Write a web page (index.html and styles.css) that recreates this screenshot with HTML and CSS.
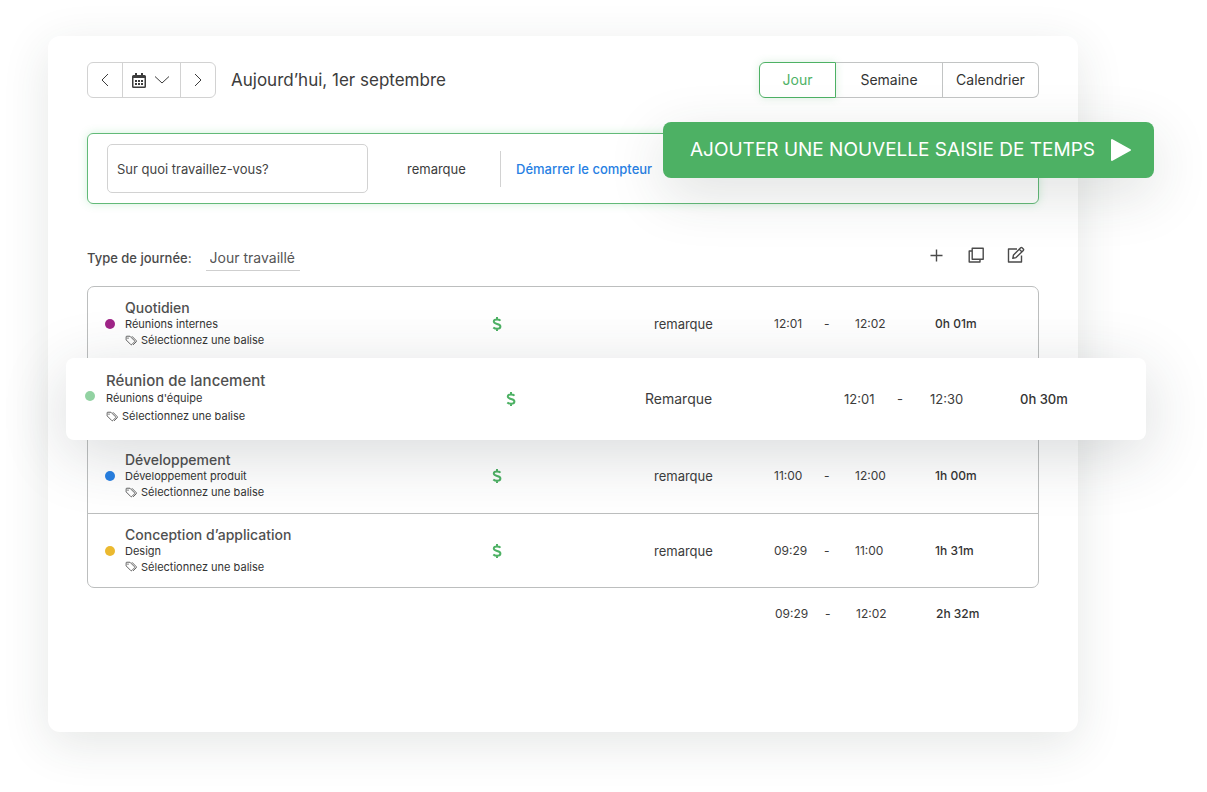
FILE: index.html
```html
<!DOCTYPE html>
<html lang="fr">
<head>
    <meta charset="UTF-8">
    <meta name="viewport" content="width=device-width, initial-scale=1.0">
    <title>Feuille de temps</title>
    <link rel="stylesheet" href="styles.css">
</head>
<body>
    <!-- Shared icons -->
    <svg class="sprite" aria-hidden="true">
        <symbol id="icon-tags" viewBox="0 0 16 14">
            <path d="M1.5 2.2v4l6.2 6.2a1 1 0 0 0 1.4 0l3.6-3.6a1 1 0 0 0 0-1.4L6.6 1.3H2.4a.9.9 0 0 0-.9.9z"/>
            <path d="M9.2 1.3l5.7 5.8a1.2 1.2 0 0 1 0 1.7l-4.1 4.1"/>
            <circle cx="4" cy="3.8" r=".4"/>
        </symbol>
        <symbol id="icon-dollar" viewBox="0 0 10 16">
            <path d="M8.5 4.6C7.7 3.8 6.4 3.4 5 3.4c-1.9 0-3.2.8-3.2 2.1C1.8 8.8 8.4 7 8.4 10.4c0 1.4-1.4 2.3-3.3 2.3-1.5 0-2.9-.5-3.8-1.3M5 1v2.4M5 12.7V15"/>
        </symbol>
    </svg>

    <main class="card">
        <header class="toolbar">
            <div class="date-nav">
                <button type="button" aria-label="Jour précédent">
                    <svg width="10" height="14" viewBox="0 0 10 14"><path d="M8 1L2 7l6 6"/></svg>
                </button>
                <button type="button" class="pick" aria-label="Choisir une date">
                    <svg width="14" height="15" viewBox="0 0 14 15">
                        <path class="solid" fill-rule="evenodd" d="M3 0h2v2h4V0h2v2h1.500a1.500 1.500 0 0 1 1.500 1.500v10a1.500 1.500 0 0 1-1.500 1.500h-11A1.500 1.500 0 0 1 0 13.500v-10A1.500 1.500 0 0 1 1.500 2H3zM1.500 5v8.500h11V5z"/>
                        <path class="solid" d="M3 7h2v2H3zM6 7h2v2H6zM9 7h2v2H9zM3 10h2v2H3zM6 10h2v2H6zM9 10h2v2H9z"/>
                    </svg>
                    <svg width="16" height="10" viewBox="0 0 16 10"><path d="M1 1.500l7 6.500 7-6.500"/></svg>
                </button>
                <button type="button" aria-label="Jour suivant">
                    <svg width="10" height="14" viewBox="0 0 10 14"><path d="M2 1l6 6-6 6"/></svg>
                </button>
            </div>
            <h1>Aujourd’hui, 1er septembre</h1>
            <div class="views">
                <button type="button" class="active">Jour</button>
                <button type="button">Semaine</button>
                <button type="button">Calendrier</button>
            </div>
        </header>

        <form class="timer">
            <input type="text" placeholder="Sur quoi travaillez-vous?" aria-label="Sur quoi travaillez-vous?">
            <button type="button" class="note">remarque</button>
            <a href="#" class="start">Démarrer le compteur</a>
        </form>

        <button type="button" class="add-entry">
            AJOUTER UNE NOUVELLE SAISIE DE TEMPS
            <svg width="22" height="24" viewBox="0 0 22 24"><path d="M2 2v20l18-10z"/></svg>
        </button>

        <div class="day">
            <label for="day-type">Type de journée:</label>
            <select id="day-type">
                <option>Jour travaillé</option>
            </select>
            <div class="actions">
                <button type="button" aria-label="Ajouter">
                    <svg width="18" height="18" viewBox="0 0 18 18"><path d="M9.500 3.500v12M3.500 9.500h12"/></svg>
                </button>
                <button type="button" aria-label="Copier">
                    <svg width="18" height="18" viewBox="0 0 18 18"><path d="M5.200 2.200h11v11h-11zM5 5H2.200v11h10.800v-2.800"/></svg>
                </button>
                <button type="button" aria-label="Modifier">
                    <svg width="18" height="18" viewBox="0 0 18 18"><path d="M10 3H1.500v13h13V9.500M6.500 9L13.700 1.800a1 1 0 0 1 1.400 0l1.200 1.200a1 1 0 0 1 0 1.400L9 11.600l-3.200.7zM12.300 3.300l2.500 2.500"/></svg>
                </button>
            </div>
        </div>

        <table class="entries">
            <tbody>
                <tr>
                    <td class="info purple">
                        <strong>Quotidien</strong>
                        <span>Réunions internes</span>
                        <span class="tag"><svg><use href="#icon-tags"/></svg>Sélectionnez une balise</span>
                    </td>
                    <td class="billable"><svg><use href="#icon-dollar"/></svg></td>
                    <td class="remark">remarque</td>
                    <td>12:01</td>
                    <td>-</td>
                    <td>12:02</td>
                    <td class="total">0h 01m</td>
                </tr>
                <tr class="raised">
                    <td class="info green">
                        <strong>Réunion de lancement</strong>
                        <span>Réunions d'équipe</span>
                        <span class="tag"><svg><use href="#icon-tags"/></svg>Sélectionnez une balise</span>
                    </td>
                    <td class="billable"><svg><use href="#icon-dollar"/></svg></td>
                    <td class="remark">Remarque</td>
                    <td>12:01</td>
                    <td>-</td>
                    <td>12:30</td>
                    <td class="total">0h 30m</td>
                </tr>
                <tr>
                    <td class="info blue">
                        <strong>Développement</strong>
                        <span>Développement produit</span>
                        <span class="tag"><svg><use href="#icon-tags"/></svg>Sélectionnez une balise</span>
                    </td>
                    <td class="billable"><svg><use href="#icon-dollar"/></svg></td>
                    <td class="remark">remarque</td>
                    <td>11:00</td>
                    <td>-</td>
                    <td>12:00</td>
                    <td class="total">1h 00m</td>
                </tr>
                <tr>
                    <td class="info yellow">
                        <strong>Conception d’application</strong>
                        <span>Design</span>
                        <span class="tag"><svg><use href="#icon-tags"/></svg>Sélectionnez une balise</span>
                    </td>
                    <td class="billable"><svg><use href="#icon-dollar"/></svg></td>
                    <td class="remark">remarque</td>
                    <td>09:29</td>
                    <td>-</td>
                    <td>11:00</td>
                    <td class="total">1h 31m</td>
                </tr>
            </tbody>
            <tfoot>
                <tr>
                    <td></td>
                    <td></td>
                    <td></td>
                    <td>09:29</td>
                    <td>-</td>
                    <td>12:02</td>
                    <td class="total">2h 32m</td>
                </tr>
            </tfoot>
        </table>
    </main>
</body>
</html>
```
FILE: styles.css
```css
* {
    box-sizing: border-box;
}
body {
    margin: 0;
    padding: 36px 129px 60px 48px;
    background: #fff;
    color: #3c3c3c;
    font-family: Inter, "Open Sans", sans-serif;
    font-size: 12px;
    line-height: 16px;
    overflow-x: hidden;
}
button,
input,
select {
    font: inherit;
    color: inherit;
    background: none;
    border: 0;
    padding: 0;
    margin: 0;
}
button {
    cursor: pointer;
}
svg {
    fill: none;
    stroke: currentColor;
    flex: none;
}
svg .solid {
    fill: currentColor;
    stroke: none;
}
.sprite {
    position: absolute;
    width: 0;
    height: 0;
}
.card {
    position: relative;
    padding: 26px 39px 92px;
    background: #fff;
    border-radius: 12px;
    box-shadow: 0 12px 48px rgba(40, 55, 50, 0.12);
}

/* Top bar */
.toolbar {
    display: flex;
    align-items: center;
}
.date-nav {
    display: flex;
    border: 1px solid #d2d2d2;
    border-radius: 6px;
}
.date-nav button {
    display: flex;
    align-items: center;
    justify-content: center;
    width: 34px;
    height: 34px;
}
.date-nav .pick {
    gap: 8px;
    width: 59px;
    padding-right: 2px;
    border: solid #d2d2d2;
    border-width: 0 1px;
}
h1 {
    margin: 0 auto 0 15px;
    font-size: 17px;
    font-weight: 400;
    line-height: 24px;
}
.views {
    display: flex;
    font-size: 14px;
}
.views button {
    width: 96px;
    height: 36px;
    border: 1px solid #c2c4c4;
    border-left: 0;
    color: #333;
}
.views button:nth-child(2) {
    width: 107px;
}
.views button:last-child {
    border-radius: 0 6px 6px 0;
}
.views .active {
    width: 77px;
    border: 1px solid #4db164;
    border-radius: 6px 0 0 6px;
    color: #4db164;
    box-shadow: 0 0 8px rgba(77, 177, 100, 0.2);
}

/* Timer */
.timer {
    display: flex;
    align-items: center;
    margin-top: 35px;
    padding: 10px 19px;
    border: 1px solid #62ba78;
    border-radius: 6px;
    font-size: 13px;
    box-shadow: 0 0 8px rgba(77, 200, 110, 0.25);
}
.timer input {
    width: 261px;
    height: 49px;
    padding: 0 9px;
    border: 1px solid #d2d2d2;
    border-radius: 5px;
}
.timer input::placeholder {
    color: #444;
    opacity: 1;
}
.timer .note {
    width: 133px;
    height: 36px;
    padding-left: 39px;
    border-right: 1px solid #d2d2d2;
    text-align: left;
}
.start {
    margin-left: 15px;
    color: #2780e3;
    font-weight: 500;
    text-decoration: none;
}
.add-entry {
    position: absolute;
    top: 86px;
    right: -76px;
    z-index: 2;
    display: flex;
    align-items: center;
    justify-content: space-between;
    width: 491px;
    height: 56px;
    padding: 0 22px 0 27px;
    border-radius: 8px;
    background: #4db164;
    color: #fff;
    font-size: 19px;
    box-shadow: 0 16px 56px rgba(40, 55, 50, 0.15);
}
.add-entry svg {
    fill: currentColor;
    stroke-width: 2;
    stroke-linejoin: round;
}

/* Day type */
.day {
    display: flex;
    align-items: center;
    margin: 41px 0 15px;
    font-size: 14px;
}
.day label {
    margin-right: 8px;
    font-size: 13px;
    font-weight: 500;
    color: #4a4a4a;
}
.day select {
    appearance: none;
    height: 26px;
    margin-left: 6px;
    padding: 0 4px;
    border-bottom: 1px solid #cfcfcf;
    color: #555;
}
.actions {
    display: flex;
    align-self: flex-start;
    gap: 22px;
    margin: 1px 14px 0 auto;
    color: #4a4a4a;
}
.actions svg {
    display: block;
    stroke-width: 1.4;
    stroke-linejoin: round;
}

/* Entries */
.entries,
.entries tbody,
.entries tfoot {
    display: block;
}
.entries tbody {
    border: 1px solid #bcbebe;
    border-radius: 7px;
}
.entries tr {
    display: grid;
    grid-template-columns: minmax(0, 1fr) 162px 120px 50px 31px 80px 103px;
    align-items: center;
    height: 74px;
}
.entries tr + tr {
    border-top: 1px solid #bcbebe;
}
.entries td {
    padding: 0;
}
.entries .info {
    position: relative;
    padding-left: 37px;
    font-size: 11px;
}
.info strong,
.info span {
    display: block;
    color: #333;
}
.info strong {
    color: #505050;
    font-size: 14px;
    font-weight: 500;
}
.info .tag {
    display: flex;
    align-items: center;
    gap: 4px;
}
.tag svg {
    width: 12px;
    height: 11px;
}
.info::before {
    content: "";
    position: absolute;
    top: 50%;
    left: 17px;
    width: 10px;
    height: 10px;
    margin-top: -5px;
    border-radius: 50%;
    background: currentColor;
}
.purple {
    color: #a02588;
}
.green {
    color: #92d2a2;
}
.blue {
    color: #2780e3;
}
.yellow {
    color: #ebb92f;
}
.billable svg {
    display: block;
    width: 10px;
    height: 16px;
    color: #4db164;
    stroke-width: 2;
}
.remark {
    font-size: 13px;
}
.total {
    color: #333;
    font-weight: 500;
}
.entries .raised {
    position: relative;
    z-index: 1;
    grid-template-columns: minmax(0, 1fr) 139px 199px 53px 33px 90px 126px;
    height: 82px;
    margin: -3px -108px -1px -22px;
    border: 0;
    border-radius: 8px;
    background: #fff;
    font-size: 13px;
    box-shadow: 0 14px 64px rgba(40, 50, 55, 0.18);
}
.raised .info {
    padding-left: 40px;
}
.raised .info strong {
    font-size: 15px;
}
.raised .info span {
    line-height: 18px;
}
.raised .info::before {
    left: 19px;
    margin-top: -8px;
}
.raised .remark {
    font-size: 14px;
}
.entries .raised + tr {
    border-top: 0;
}
.entries tfoot tr {
    height: 52px;
}
```
